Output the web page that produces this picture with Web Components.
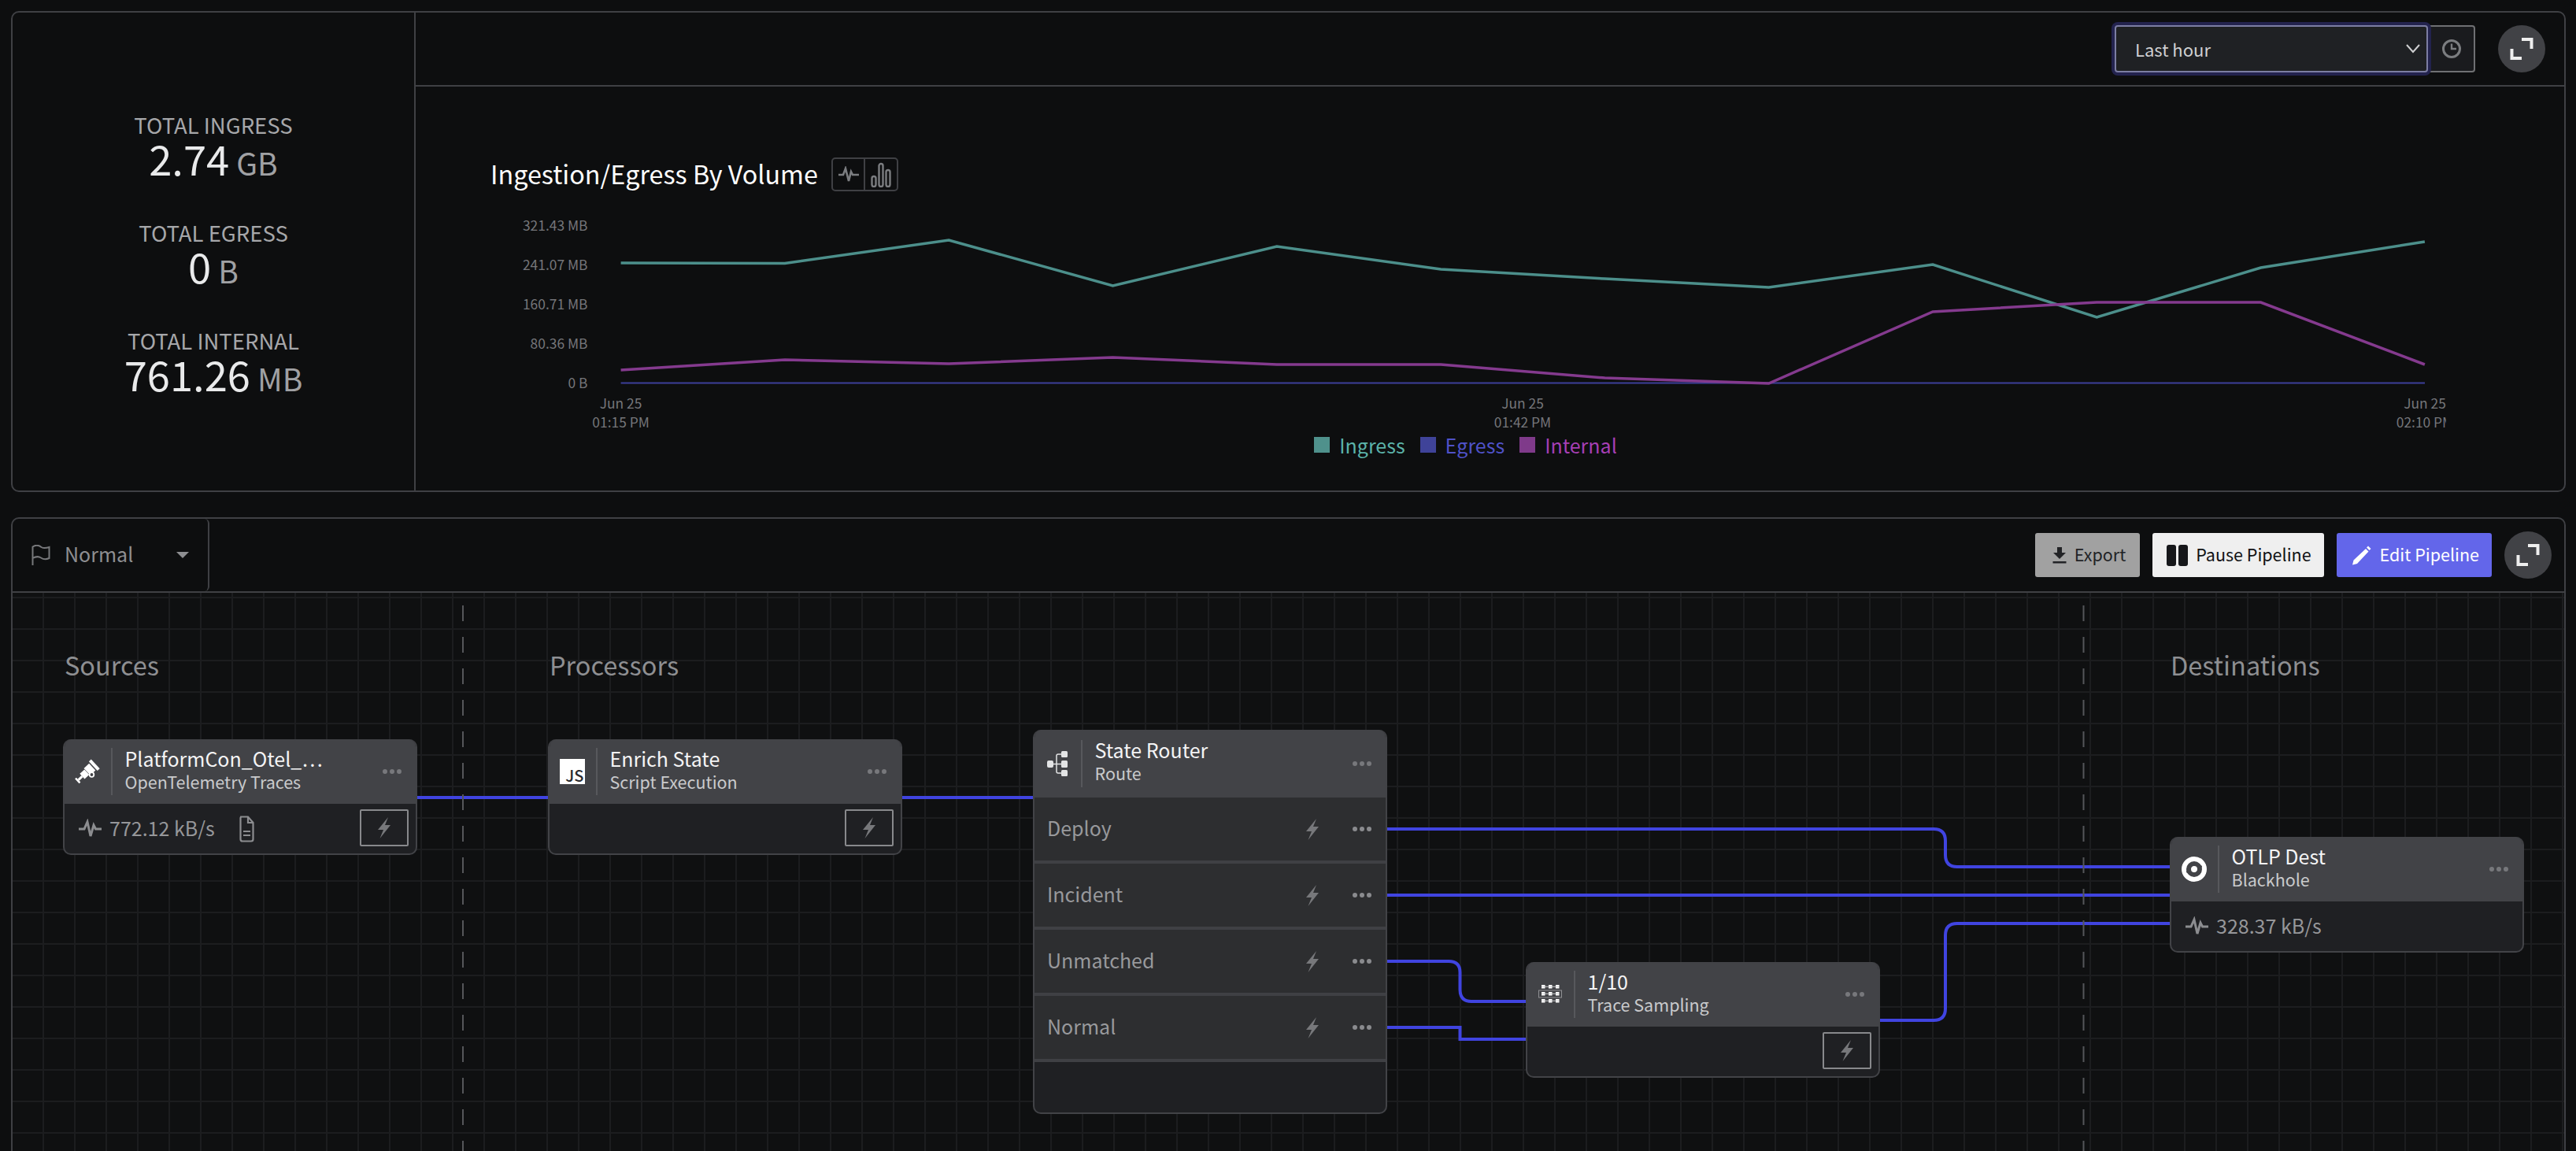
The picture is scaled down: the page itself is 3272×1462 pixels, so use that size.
<!DOCTYPE html>
<html>
<head>
<meta charset="utf-8">
<title>Pipeline</title>
<style>
    html, body {
        margin: 0;
        height: 100%;
        overflow: hidden;
        background: #0d0e0f;
        font-family: "Noto Sans CJK JP", "Noto Sans", sans-serif;
    }
    body {
        display: flex;
        flex-direction: column;
        gap: 32px;
        padding: 14px 13px 0 14px;
        box-sizing: border-box;
    }
</style>
</head>
<body>
    <metrics-panel>
        <stat-block slot="stats" label="TOTAL INGRESS" value="2.74" unit="GB"></stat-block>
        <stat-block slot="stats" label="TOTAL EGRESS" value="0" unit="B"></stat-block>
        <stat-block slot="stats" label="TOTAL INTERNAL" value="761.26" unit="MB"></stat-block>
        <time-picker slot="actions"></time-picker>
        <expand-button slot="actions"></expand-button>
        <volume-chart></volume-chart>
    </metrics-panel>

    <pipeline-panel>
        <severity-menu slot="left"></severity-menu>
        <tool-button slot="right" kind="grey" icon="download" label="Export"></tool-button>
        <tool-button slot="right" kind="light" icon="pause" label="Pause Pipeline"></tool-button>
        <tool-button slot="right" kind="primary" icon="pencil" label="Edit Pipeline"></tool-button>
        <expand-button slot="right" small></expand-button>

        <pipeline-canvas>
            <column-title style="left: 66px">Sources</column-title>
            <column-title style="left: 682px">Processors</column-title>
            <column-title style="left: 2741px">Destinations</column-title>

            <pipeline-node style="left: 64px; top: 186px" label="PlatformCon_Otel_…" sub="OpenTelemetry Traces" icon="telescope" bolt>
                <node-stat value="772.12 kB/s" doc></node-stat>
            </pipeline-node>

            <pipeline-node style="left: 680px; top: 186px" label="Enrich State" sub="Script Execution" icon="js" bolt></pipeline-node>

            <pipeline-node style="left: 1296px; top: 174px" label="State Router" sub="Route" icon="router" tall>
                <route-row>Deploy</route-row>
                <route-row>Incident</route-row>
                <route-row>Unmatched</route-row>
                <route-row>Normal</route-row>
                <route-spacer></route-spacer>
            </pipeline-node>

            <pipeline-node style="left: 1922px; top: 469px" label="1/10" sub="Trace Sampling" icon="sampling" bolt></pipeline-node>

            <pipeline-node style="left: 2740px; top: 310px" label="OTLP Dest" sub="Blackhole" icon="blackhole">
                <node-stat value="328.37 kB/s"></node-stat>
            </pipeline-node>
        </pipeline-canvas>
    </pipeline-panel>

<script>
const ICONS = {
    pulse: `<svg viewBox="0 0 29 26" width="29" height="26"><path d="M0 13 H7 L11 4 L15 22 L19 8 L21.500 13 H29" fill="none" stroke="currentColor" stroke-width="3"/></svg>`,
    bolt: `<svg viewBox="0 0 18 27" width="18" height="27"><path d="M14 0 L1 16 H8 L3.500 27 L17 10 H10 Z" fill="currentColor"/></svg>`,
    doc: `<svg viewBox="0 0 19 34" width="19" height="34" fill="none" stroke="currentColor" stroke-width="2.200"><path d="M2 1.500 H11 L17.500 9 V30 Q17.500 32.500 15 32.500 H4 Q1.500 32.500 1.500 30 V3 Z"/><path d="M11 1.500 V9 H17.500"/><path d="M5 20 H14 M5 25 H14"/></svg>`,
    flag: `<svg viewBox="0 0 24 26" width="24" height="26" fill="none" stroke="currentColor" stroke-width="2"><path d="M1.500 26 V2.500 C6 -0.500 10 1 12.500 3 C15 4.500 18 4.500 22.500 3 V17 C18 19 15 18.500 12 16.500 C9 14.500 5 15 1.500 17"/></svg>`,
    clock: `<svg viewBox="0 0 26 26" width="26" height="26" fill="none" stroke="currentColor" stroke-width="3"><circle cx="13" cy="13" r="10.500"/><path d="M13 6.500 V13 H19" stroke-width="2.400"/></svg>`,
    chevron: `<svg viewBox="0 0 18 12" width="18" height="12" fill="none" stroke="currentColor" stroke-width="2"><path d="M1 1 L9 10 L17 1"/></svg>`,
    expand: `<svg viewBox="0 0 30 28" width="30" height="28" fill="none" stroke="currentColor" stroke-width="4"><path d="M15 2 H27.500 V14"/><path d="M2.500 14 V26 H15"/></svg>`,
    download: `<svg viewBox="0 0 18 21" width="18" height="21"><path d="M6 0 H12 V7 H17 L9 15 L1 7 H6 Z M0.500 18 H17.500 V20.500 H0.500 Z" fill="currentColor"/></svg>`,
    pencil: `<svg viewBox="0 0 25 25" width="25" height="25"><path d="M18 4 L21.500 7.500 L7 23 L1 24.500 L2.500 18.500 Z M19 2.500 L21 0.500 L24.500 4 L22.500 6 Z" fill="currentColor"/></svg>`,
    telescope: `<svg viewBox="0 0 34 34" width="34" height="34"><g fill="#fff" transform="rotate(-43 17 17)"><rect x="27" y="9" width="4" height="16"/><rect x="16.500" y="11" width="9" height="12"/><rect x="8" y="12.500" width="8" height="9"/><rect x="1.500" y="15.500" width="6.500" height="3"/><rect x="-1" y="13" width="2.500" height="8"/></g><circle cx="22.500" cy="21" r="2.800" fill="#424347" stroke="#fff" stroke-width="1.800"/></svg>`,
    js: `<svg viewBox="0 0 32 32" width="32" height="32"><rect width="32" height="32" fill="#fff"/><text x="30.500" y="29" text-anchor="end" font-family="'Noto Sans CJK JP', sans-serif" font-weight="500" font-size="20" fill="#2a2b2e">JS</text></svg>`,
    router: `<svg viewBox="0 0 26 32" width="26" height="32" fill="#e3e4e5"><rect x="0" y="12" width="8" height="9" rx="2"/><rect x="18" y="0" width="8" height="8" rx="1.500"/><rect x="18" y="12" width="8" height="9" rx="1.500"/><rect x="18" y="24" width="8" height="8" rx="1.500"/><path d="M18 4 H14 Q12 4 12 6 V26 Q12 28 14 28 H18 M8 16.500 H18" fill="none" stroke="#e3e4e5" stroke-width="1.500"/></svg>`,
    sampling: `<svg viewBox="0 0 30 24" width="30" height="24"><g fill="#fff"><rect x="4" y="0" width="4.500" height="4.500"/><rect x="13" y="0" width="4.500" height="4.500"/><rect x="22" y="0" width="4.500" height="4.500"/><rect x="4" y="9" width="4.500" height="4.500"/><rect x="13" y="9" width="4.500" height="4.500"/><rect x="22" y="9" width="4.500" height="4.500"/><rect x="4" y="18" width="4.500" height="4.500"/><rect x="13" y="18" width="4.500" height="4.500"/><rect x="22" y="18" width="4.500" height="4.500"/></g><path d="M4 2.250 H26 M4 11.250 H26 M4 20.250 H26" stroke="#cfd0d2" stroke-width="1"/><rect x="0.500" y="7" width="29" height="9" fill="none" stroke="#8f9093" stroke-width="1"/></svg>`,
    blackhole: `<svg viewBox="0 0 32 32" width="32" height="32"><circle cx="16" cy="16" r="13" fill="none" stroke="#fff" stroke-width="6"/><circle cx="16" cy="16" r="4" fill="#fff"/><path d="M6 20 C7 12 13 8 20 9 C14 11 10 14 9 22 Z M26 12 C25 20 19 24 12 23 C18 21 22 18 23 10 Z" fill="#424347"/></svg>`
};

class AppIcon extends HTMLElement {
    constructor () {
        super();
        this.attachShadow({mode: 'open'}).innerHTML = `
            <style>:host { display: inline-flex; } svg { display: block; }</style>
            ${ICONS[this.getAttribute('name')] || ''}`;
    }
}
customElements.define('app-icon', AppIcon);

class StatBlock extends HTMLElement {
    constructor () {
        super();
        this.attachShadow({mode: 'open'}).innerHTML = `
            <style>
                :host { display: flex; flex-direction: column; align-items: center; }
                #label { font-size: 27.500px; line-height: 36px; color: #a6a7aa; }
                #row { display: flex; align-items: baseline; gap: 9px; height: 52px; line-height: 48px; }
                #value { font-size: 52.500px; color: #e9eaeb; }
                #unit { font-size: 39px; color: #a0a1a4; }
            </style>
            <div id="label">${this.getAttribute('label')}</div>
            <div id="row">
                <span id="value">${this.getAttribute('value')}</span>
                <span id="unit">${this.getAttribute('unit')}</span>
            </div>`;
    }
}
customElements.define('stat-block', StatBlock);

class ExpandButton extends HTMLElement {
    constructor () {
        super();
        this.attachShadow({mode: 'open'}).innerHTML = `
            <style>
                :host {
                    display: flex; align-items: center; justify-content: center;
                    width: 60px; height: 60px; border-radius: 50%;
                    background: #414246; color: #eeeeee; flex: none;
                }
            </style>
            <app-icon name="expand"></app-icon>`;
    }
}
customElements.define('expand-button', ExpandButton);

class TimePicker extends HTMLElement {
    constructor () {
        super();
        this.attachShadow({mode: 'open'}).innerHTML = `
            <style>
                :host { display: flex; height: 60px; width: 458px; position: relative; font-size: 22px; }
                #select {
                    flex: none; box-sizing: border-box; width: 398px; height: 60px;
                    display: flex; align-items: center; justify-content: space-between;
                    padding: 0 8px 0 24px;
                    background: #1f2124; color: #cfd0d2;
                    border: 2px solid #7c7ea3; border-radius: 4px;
                    box-shadow: 0 0 0 4px #23234e;
                    position: relative; z-index: 1;
                }
                #select span { line-height: 30px; }
                #clock {
                    flex: 1; box-sizing: border-box; margin-left: -2px;
                    display: flex; align-items: center; justify-content: flex-end;
                    padding-right: 15px; color: #7b7d80;
                    background: #1a1b1e;
                    border: 2px solid #6f7073; border-left: 0; border-radius: 0 4px 4px 0;
                }
            </style>
            <div id="select"><span>Last hour</span><app-icon name="chevron"></app-icon></div>
            <div id="clock"><app-icon name="clock"></app-icon></div>`;
    }
}
customElements.define('time-picker', TimePicker);

class VolumeChart extends HTMLElement {
    constructor () {
        super();
        const xs = [...Array(12).keys()].map(i => 788.6 + i * 208.3);
        const line = ys => ys.map((y, i) => `${i ? 'L' : 'M'}${xs[i].toFixed(1)} ${y}`).join(' ');
        const ingress = [334, 334.5, 305, 363, 313, 342, 354, 365, 336, 403, 340, 307];
        const internal = [470, 457, 462, 454, 463, 463, 480, 487, 396, 384, 384, 463];
        const yLabels = [['321.43 MB', 287], ['241.07 MB', 337], ['160.71 MB', 387], ['80.36 MB', 437], ['0 B', 487]];
        const xLabels = [788.6, 1934, 3080];
        const times = ['01:15 PM', '01:42 PM', '02:10 PM'];
        this.attachShadow({mode: 'open'}).innerHTML = `
            <style>
                :host { display: block; }
                #head { display: flex; align-items: center; gap: 17px; padding: 90px 0 0 95px; height: 43px; }
                h2 { margin: 0 0 3px; font-size: 32.300px; font-weight: 400; line-height: 40px; color: #ffffff; }
                #toggle {
                    display: flex; box-sizing: border-box; width: 85px; height: 43px;
                    border: 2px solid #3f4044; border-radius: 5px; color: #7b7d80;
                }
                #toggle div { flex: 1; display: flex; align-items: center; justify-content: center; }
                #toggle div + div { border-left: 2px solid #3f4044; }
                svg#plot { display: block; margin: 22px 0 0 1px; }
                #plot text { font-family: inherit; font-size: 17.400px; fill: #75767a; }
                #legend {
                    display: flex; justify-content: center; padding-right: 62px;
                    height: 36px; align-items: center; font-size: 25px; line-height: 34px; margin-top: -3px;
                }
                .key { display: flex; align-items: center; margin-right: 19px; }
                .key i { width: 20px; height: 20px; margin-right: 12px; }
            </style>
            <div id="head">
                <h2>Ingestion/Egress By Volume</h2>
                <div id="toggle">
                    <div><svg viewBox="0 0 26 22" width="26" height="22"><path d="M0 11 H6 L9 3 L13 19 L16 7 L18 11 H26" fill="none" stroke="currentColor" stroke-width="2.600"/></svg></div>
                    <div><svg viewBox="0 0 26 32" width="26" height="32" fill="none" stroke="currentColor" stroke-width="2.400"><rect x="1.500" y="18" width="5" height="13" rx="2.500"/><rect x="10.500" y="2" width="5" height="29" rx="2.500"/><rect x="19.500" y="10" width="5" height="21" rx="2.500"/></svg></div>
                </div>
            </div>
            <svg id="plot" width="2578" height="285" viewBox="529 265 2578 285">
                ${yLabels.map(([t, y]) => `<text x="746.500" y="${y + 6}" text-anchor="end">${t}</text>`).join('')}
                ${xLabels.map((x, i) => `
                    <text x="${x}" y="519" text-anchor="middle">Jun 25</text>
                    <text x="${x}" y="543" text-anchor="middle">${times[i]}</text>`).join('')}
                <path d="M788.600 486.500 H3080" stroke="#3c3f9a" stroke-width="2" fill="none"/>
                <path d="${line(ingress)}" stroke="#4c8f8b" stroke-width="3.500" fill="none"/>
                <path d="${line(internal)}" stroke="#843a8e" stroke-width="3.500" fill="none"/>
            </svg>
            <div id="legend">
                <div class="key" style="color: #5bb3aa"><i style="background: #4f918c"></i>Ingress</div>
                <div class="key" style="color: #4f52c9"><i style="background: #3f4399"></i>Egress</div>
                <div class="key" style="color: #a63fb5; margin-right: 0"><i style="background: #7f3a8a"></i>Internal</div>
            </div>`;
    }
}
customElements.define('volume-chart', VolumeChart);

class MetricsPanel extends HTMLElement {
    constructor () {
        super();
        this.attachShadow({mode: 'open'}).innerHTML = `
            <style>
                :host {
                    display: grid; grid-template-columns: 512px 1fr;
                    box-sizing: border-box; height: 611px; flex: none;
                    border: 2px solid #3f4044; border-radius: 10px;
                    overflow: hidden;
                }
                #stats {
                    display: flex; flex-direction: column; justify-content: center; gap: 49px;
                    padding-top: 2px;
                    border-right: 2px solid #3f4044;
                }
                #main { min-width: 0; }
                #bar {
                    display: flex; justify-content: flex-end; align-items: center; gap: 29px;
                    box-sizing: border-box; height: 94px; padding: 0 24px 0 0;
                    border-bottom: 2px solid #3f4044;
                }
            </style>
            <div id="stats"><slot name="stats"></slot></div>
            <div id="main">
                <div id="bar"><slot name="actions"></slot></div>
                <slot></slot>
            </div>`;
    }
}
customElements.define('metrics-panel', MetricsPanel);

class SeverityMenu extends HTMLElement {
    constructor () {
        super();
        this.attachShadow({mode: 'open'}).innerHTML = `
            <style>
                :host {
                    display: flex; align-items: center; box-sizing: border-box;
                    width: 250px; height: 100%; padding: 0 24px;
                    border-right: 2px solid #3f4044; border-radius: 0 6px 6px 0;
                    color: #8d8e91; font-size: 25px;
                }
                app-icon { color: #77787b; margin-right: 18px; }
                span { flex: 1; line-height: 36px; padding-bottom: 4px; }
                i { width: 0; height: 0; border: 8px solid transparent; border-top-color: #8d8e91; border-bottom: 0; }
            </style>
            <app-icon name="flag"></app-icon>
            <span>Normal</span>
            <i></i>`;
    }
}
customElements.define('severity-menu', SeverityMenu);

class ToolButton extends HTMLElement {
    constructor () {
        super();
        const icon = this.getAttribute('icon');
        const glyph = icon === 'pause'
            ? '<b></b><b></b>'
            : `<app-icon name="${icon}"></app-icon>`;
        this.attachShadow({mode: 'open'}).innerHTML = `
            <style>
                :host {
                    display: flex; align-items: center; height: 56px; box-sizing: border-box;
                    padding: 0 16px 0 18px; border-radius: 3px; font-size: 21.500px; flex: none;
                }
                :host([kind="grey"]) { background: #a1a1a1; color: #222326; padding: 0 18px 0 22px; }
                :host([kind="light"]) { background: #efefef; color: #111214; }
                :host([kind="primary"]) { background: #6366ea; color: #ffffff; padding-left: 19px; }
                b { display: block; width: 12px; height: 27px; background: #16171a; border-radius: 3px; }
                b + b { margin-left: 3px; }
                #glyph { display: flex; margin-right: 10px; }
                :host([kind="primary"]) #glyph { margin-right: 11px; }
                span { line-height: 32px; padding-bottom: 3px; }
            </style>
            <div id="glyph">${glyph}</div>
            <span>${this.getAttribute('label')}</span>`;
    }
}
customElements.define('tool-button', ToolButton);

class PipelinePanel extends HTMLElement {
    constructor () {
        super();
        this.attachShadow({mode: 'open'}).innerHTML = `
            <style>
                :host {
                    display: block; box-sizing: border-box; height: 840px; flex: none;
                    border: 2px solid #3f4044; border-radius: 10px;
                    overflow: hidden;
                }
                #bar {
                    display: flex; justify-content: space-between; align-items: center;
                    box-sizing: border-box; height: 94px; padding-right: 16px;
                    border-bottom: 2px solid #3f4044;
                }
                #right { display: flex; align-items: center; gap: 16px; }
                #left { height: 100%; }
            </style>
            <div id="bar">
                <div id="left"><slot name="left"></slot></div>
                <div id="right"><slot name="right"></slot></div>
            </div>
            <slot></slot>`;
    }
}
customElements.define('pipeline-panel', PipelinePanel);

class PipelineCanvas extends HTMLElement {
    constructor () {
        super();
        const wires = [
            'M530 1012 H696',
            'M1145 1012 H1312',
            'M1762 1052 H2456 Q2471 1052 2471 1067 V1085 Q2471 1100 2486 1100 H2756',
            'M1762 1136 H2756',
            'M2387 1295 H2456 Q2471 1295 2471 1280 V1187 Q2471 1172 2486 1172 H2756',
            'M1762 1220 H1840 Q1854.500 1220 1854.500 1234 V1256 Q1854.500 1271 1869 1271 H1938',
            'M1762 1304 H1854.500 V1319 H1938'
        ];
        this.attachShadow({mode: 'open'}).innerHTML = `
            <style>
                :host {
                    display: block; position: relative; height: 740px;
                    background-color: #0f1011;
                    background-image:
                        linear-gradient(to right, #1c1d1f 2px, transparent 2px),
                        linear-gradient(to bottom, #1c1d1f 2px, transparent 2px);
                    background-size: 40px 40px;
                    background-position: 38px 5px;
                }
                svg { position: absolute; left: 0; top: 0; }
            </style>
            <svg width="3242" height="740" viewBox="16 752 3242 740" fill="none">
                ${wires.map(d => `<path d="${d}" stroke="#4044e0" stroke-width="4"/>`).join('')}
                <path d="M588 768 V1490 M2646.500 768 V1490" stroke="#55565a" stroke-width="2" stroke-dasharray="20 20"/>
            </svg>
            <slot></slot>`;
    }
}
customElements.define('pipeline-canvas', PipelineCanvas);

class ColumnTitle extends HTMLElement {
    constructor () {
        super();
        this.attachShadow({mode: 'open'}).innerHTML = `
            <style>
                :host {
                    position: absolute; top: 68px;
                    font-size: 32.500px; line-height: 46px; color: #8e8f92;
                }
            </style>
            <slot></slot>`;
    }
}
customElements.define('column-title', ColumnTitle);

class PipelineNode extends HTMLElement {
    constructor () {
        super();
        const bolt = this.hasAttribute('bolt');
        this.attachShadow({mode: 'open'}).innerHTML = `
            <style>
                :host {
                    position: absolute; display: flex; flex-direction: column; box-sizing: border-box;
                    width: 450px; min-height: 147px;
                    background: #1f2023; border-radius: 10px; overflow: hidden;
                    border: 2px solid #424347; border-top: 0;
                }
                #head {
                    display: flex; align-items: center; flex: none; box-sizing: border-box;
                    height: 82px; margin: 0 -2px; background: #424347;
                }
                :host([tall]) #head { height: 86px; }
                #icon { width: 61px; display: flex; justify-content: center; flex: none; }
                #rule { width: 2px; height: 60px; background: #57585c; flex: none; }
                #text { flex: 1; padding: 0 0 5px 15.500px; display: flex; flex-direction: column; min-width: 0; }
                :host([tall]) #text { padding-bottom: 8px; }
                #title { font-size: 25px; line-height: 30px; color: #f4f4f5; }
                #sub { font-size: 21.500px; line-height: 29px; color: #c9cacc; }
                #dots { display: flex; gap: 3px; margin-right: 20px; flex: none; }
                #dots i { width: 6px; height: 6px; border-radius: 50%; background: #77787c; }
                #body { flex: 1; display: flex; flex-direction: column; position: relative; }
                #bolt {
                    position: absolute; right: 9px; top: 7px;
                    box-sizing: border-box; width: 62px; height: 47px;
                    display: flex; align-items: center; justify-content: center;
                    border: 2px solid #88898c; border-radius: 2px; color: #77787b;
                }
            </style>
            <div id="head">
                <div id="icon"><app-icon name="${this.getAttribute('icon')}"></app-icon></div>
                <div id="rule"></div>
                <div id="text">
                    <div id="title">${this.getAttribute('label')}</div>
                    <div id="sub">${this.getAttribute('sub')}</div>
                </div>
                <div id="dots"><i></i><i></i><i></i></div>
            </div>
            <div id="body">
                <slot></slot>
                ${bolt ? '<div id="bolt"><app-icon name="bolt"></app-icon></div>' : ''}
            </div>`;
    }
}
customElements.define('pipeline-node', PipelineNode);

class NodeStat extends HTMLElement {
    constructor () {
        super();
        const doc = this.hasAttribute('doc');
        this.attachShadow({mode: 'open'}).innerHTML = `
            <style>
                :host {
                    display: flex; align-items: center; height: 63px; padding-left: 18px;
                    font-size: 25px; color: #96979a;
                }
                app-icon { color: #8c8d90; }
                span { margin-left: 10px; line-height: 36px; padding-bottom: 3px; }
                #doc { margin-left: 31px; }
            </style>
            <app-icon name="pulse"></app-icon>
            <span>${this.getAttribute('value')}</span>
            ${doc ? '<app-icon id="doc" name="doc"></app-icon>' : ''}`;
    }
}
customElements.define('node-stat', NodeStat);

class RouteRow extends HTMLElement {
    constructor () {
        super();
        this.attachShadow({mode: 'open'}).innerHTML = `
            <style>
                :host {
                    display: flex; align-items: center; box-sizing: border-box; height: 84px;
                    padding-left: 16px; background: #2d2e30;
                    border-bottom: 4px solid #3f4044;
                    font-size: 25px; color: #98999c;
                }
                #name { flex: 1; line-height: 36px; padding-bottom: 4px; }
                app-icon { color: #77787b; }
                #dots { display: flex; gap: 3px; margin: 0 18px 0 42px; }
                #dots i { width: 6px; height: 6px; border-radius: 50%; background: #8a8b8e; }
            </style>
            <div id="name"><slot></slot></div>
            <app-icon name="bolt"></app-icon>
            <div id="dots"><i></i><i></i><i></i></div>`;
    }
}
customElements.define('route-row', RouteRow);

class RouteSpacer extends HTMLElement {
    constructor () {
        super();
        this.attachShadow({mode: 'open'}).innerHTML = `<style>:host { display: block; height: 64px; }</style>`;
    }
}
customElements.define('route-spacer', RouteSpacer);
</script>
</body>
</html>
